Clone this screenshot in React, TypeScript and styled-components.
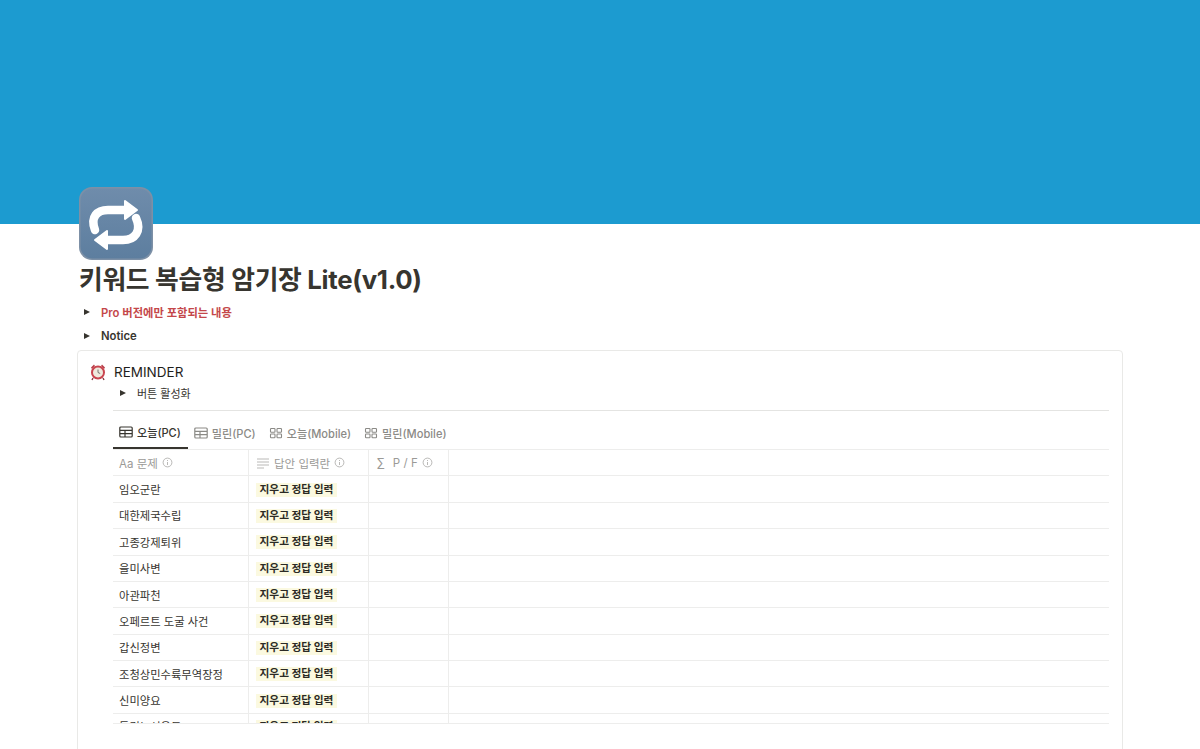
import styled, { createGlobalStyle } from "styled-components";

const GlobalStyle = createGlobalStyle`
  html, body {
    margin: 0;
    padding: 0;
    height: 749px;
    overflow: hidden;
    background: #fff;
    font-family: Inter, "Noto Sans CJK KR", "Liberation Sans", sans-serif;
    color: #37352f;
  }
`;

const Cover = styled.div`
  height: 224px;
  background: #1c9bd0;
`;

const Page = styled.div`
  padding: 0 77px;
`;

const PageIcon = styled.div`
  width: 78px;
  height: 78px;
  margin: -39px 0 0 0;
  svg {
    display: block;
  }
`;

const Title = styled.h1`
  margin: 0 0 0 2px;
  height: 36px;
  line-height: 34px;
  font-size: 25.8px;
  font-weight: 700;
  letter-spacing: -0.3px;
  color: #37352f;
  white-space: nowrap;
`;

const Toggle = styled.div<{ $red?: boolean }>`
  display: flex;
  align-items: center;
  height: 24px;
  box-sizing: border-box;
  padding: 2px 0 0 7px;
  font-size: 11.3px;
  font-weight: 600;
  color: ${(p) => (p.$red ? "#c4474a" : "#37352f")};
`;

const Caret = styled.span`
  width: 0;
  height: 0;
  margin-right: 11px;
  border-left: 6px solid #37352f;
  border-top: 3.5px solid transparent;
  border-bottom: 3.5px solid transparent;
`;

const Callout = styled.div`
  display: flex;
  margin-top: 3px;
  height: 420px;
  box-sizing: border-box;
  padding: 11px 13px 0 11px;
  border: 1px solid #e9e9e7;
  border-radius: 4px;
`;

const CalloutIcon = styled.div`
  width: 24px;
  flex: none;
  padding-top: 1px;
`;

const CalloutBody = styled.div`
  flex: 1;
  min-width: 0;
`;

const CalloutTitle = styled.div`
  height: 20px;
  line-height: 20px;
  padding-left: 1px;
  font-size: 13.5px;
  color: #1f1e1b;
`;

const SubToggle = styled.div`
  display: flex;
  align-items: center;
  height: 22px;
  padding-left: 7px;
  font-size: 11px;
  color: #37352f;
`;

const Divider = styled.div`
  margin-top: 6px;
  border-top: 1px solid #e4e4e2;
`;

const Tabs = styled.div`
  display: flex;
  margin-top: 10px;
  height: 28px;
  border-bottom: 1px solid #ededec;
`;

const Tab = styled.div<{ $active?: boolean }>`
  display: flex;
  align-items: center;
  gap: 4px;
  height: 28px;
  padding: 0 7px 5px 6px;
  box-sizing: border-box;
  font-size: 11.1px;
  font-weight: 500;
  white-space: nowrap;
  color: ${(p) => (p.$active ? "#37352f" : "#8b8a86")};
  border-bottom: ${(p) => (p.$active ? "2px solid #37352f" : "none")};
  svg {
    flex: none;
  }
`;

const TableClip = styled.div`
  height: 273px;
  overflow: hidden;
  border-bottom: 1px solid #ededec;
`;

const Row = styled.div`
  display: grid;
  grid-template-columns: 136px 120px 80px 1fr;
  height: 26.38px;
  box-sizing: border-box;
  border-bottom: 1px solid #ededec;
`;

const HeadCell = styled.div`
  display: flex;
  align-items: center;
  gap: 4px;
  padding-left: 6px;
  font-size: 11.5px;
  color: #9b9a97;
  border-right: 1px solid #ededec;
  white-space: nowrap;
  &:nth-child(n + 2) {
    padding-left: 8px;
  }
  &:last-child {
    border-right: none;
  }
`;

const Cell = styled.div`
  display: flex;
  align-items: center;
  padding-left: 6px;
  font-size: 11.3px;
  color: #37352f;
  white-space: nowrap;
  border-right: 1px solid #ededec;
  &:last-child {
    border-right: none;
  }
`;

const Mark = styled.span`
  padding: 0 3.5px;
  margin: 1px 0 0 1px;
  background: #fbf9e0;
  font-size: 10.7px;
  line-height: 14px;
  font-weight: 700;
  color: #2b2a25;
`;

const Sigma = styled.span`
  font-size: 12px;
  margin-right: 4px;
`;

const Spaced = styled.span`
  letter-spacing: 0.1px;
`;

const LinesSvg = styled.svg`
  margin-left: -1px;
`;

const rows = [
  "임오군란",
  "대한제국수립",
  "고종강제퇴위",
  "을미사변",
  "아관파천",
  "오페르트 도굴 사건",
  "갑신정변",
  "조청상민수륙무역장정",
  "신미양요",
  "독립노선운동",
];

function RepeatEmoji() {
  return (
    <svg width="78" height="78" viewBox="0 0 78 78">
      <defs>
        <linearGradient id="rep" x1="0" y1="0" x2="0" y2="1">
          <stop offset="0" stopColor="#6f8cab" />
          <stop offset="1" stopColor="#5d7e9f" />
        </linearGradient>
      </defs>
      <rect x="2" y="2" width="74" height="73" rx="13" fill="#7d90a6" />
      <rect x="3.5" y="3.5" width="71" height="70" rx="12" fill="url(#rep)" />
      <path
        d="M18 45 C13 32 20 25 31 25 L50 25"
        fill="none"
        stroke="#fff"
        strokeWidth="8.5"
        strokeLinecap="round"
      />
      <path d="M48 16 L60 25 L48 34 Z" fill="#fff" stroke="#fff" strokeWidth="2" strokeLinejoin="round" />
      <path
        d="M59 33 C65 46 58 55 46 55 L28 55"
        fill="none"
        stroke="#fff"
        strokeWidth="8.5"
        strokeLinecap="round"
      />
      <path d="M30 46 L18 55 L30 64 Z" fill="#fff" stroke="#fff" strokeWidth="2" strokeLinejoin="round" />
    </svg>
  );
}

function ClockEmoji() {
  return (
    <svg width="18" height="18" viewBox="0 0 18 18">
      <path d="M2 4.5 L5 1.5 L6 3 L3 6 Z" fill="#b8404a" />
      <path d="M16 4.5 L13 1.5 L12 3 L15 6 Z" fill="#b8404a" />
      <path d="M4 15 L3 17 M14 15 L15 17" stroke="#8a3a40" strokeWidth="1.4" />
      <circle cx="9" cy="9.5" r="7" fill="#c9454f" />
      <circle cx="9" cy="9.5" r="5" fill="#efe9dd" />
      <path d="M9 6.5 V9.5 L11.2 10.5" stroke="#555" strokeWidth="0.8" fill="none" />
    </svg>
  );
}

function TableIcon({ color }: { color: string }) {
  return (
    <svg width="14" height="14" viewBox="0 0 14 14" fill="none" stroke={color} strokeWidth="1.2">
      <rect x="0.8" y="2" width="12.4" height="10" rx="1" />
      <path d="M1 5.3 H13 M1 8.6 H13 M6 5.3 V12" />
    </svg>
  );
}

function GalleryIcon() {
  return (
    <svg width="14" height="14" viewBox="0 0 14 14" fill="none" stroke="#8b8a86" strokeWidth="1.1">
      <rect x="1.5" y="2.5" width="4.5" height="3.8" rx="0.7" />
      <rect x="8" y="2.5" width="4.5" height="3.8" rx="0.7" />
      <rect x="1.5" y="8" width="4.5" height="3.8" rx="0.7" />
      <rect x="8" y="8" width="4.5" height="3.8" rx="0.7" />
    </svg>
  );
}

function InfoIcon() {
  return (
    <svg width="11" height="11" viewBox="0 0 11 11" fill="none" stroke="#a8a7a4" strokeWidth="0.8">
      <circle cx="5.5" cy="5.5" r="4.4" />
      <path d="M5.5 5 V8 M5.5 3 V4" />
    </svg>
  );
}

function LinesIcon() {
  return (
    <LinesSvg width="14" height="12" viewBox="0 0 14 12" fill="none" stroke="#a8a7a4" strokeWidth="0.8">
      <path d="M1 2 H13 M1 5 H13 M1 8 H13 M1 11 H8" />
    </LinesSvg>
  );
}

export default function App() {
  return (
    <>
      <GlobalStyle />
      <Cover />
      <Page>
        <PageIcon>
          <RepeatEmoji />
        </PageIcon>
        <Title>키워드 복습형 암기장 Lite(v1.0)</Title>
        <Toggle $red>
          <Caret />
          Pro 버전에만 포함되는 내용
        </Toggle>
        <Toggle>
          <Caret />
          Notice
        </Toggle>
        <Callout>
          <CalloutIcon>
            <ClockEmoji />
          </CalloutIcon>
          <CalloutBody>
            <CalloutTitle>REMINDER</CalloutTitle>
            <SubToggle>
              <Caret />
              버튼 활성화
            </SubToggle>
            <Divider />
            <Tabs>
              <Tab $active>
                <TableIcon color="#37352f" />
                오늘(PC)
              </Tab>
              <Tab>
                <TableIcon color="#8b8a86" />
                밀린(PC)
              </Tab>
              <Tab>
                <GalleryIcon />
                오늘(Mobile)
              </Tab>
              <Tab>
                <GalleryIcon />
                밀린(Mobile)
              </Tab>
            </Tabs>
            <TableClip>
              <Row>
                <HeadCell>
                  Aa 문제 <InfoIcon />
                </HeadCell>
                <HeadCell>
                  <LinesIcon /> 답안 입력란 <InfoIcon />
                </HeadCell>
                <HeadCell>
                  <Sigma>∑</Sigma> <Spaced>P / F</Spaced> <InfoIcon />
                </HeadCell>
                <HeadCell />
              </Row>
              {rows.map((name) => (
                <Row key={name}>
                  <Cell>{name}</Cell>
                  <Cell>
                    <Mark>지우고 정답 입력</Mark>
                  </Cell>
                  <Cell />
                  <Cell />
                </Row>
              ))}
            </TableClip>
          </CalloutBody>
        </Callout>
      </Page>
    </>
  );
}
